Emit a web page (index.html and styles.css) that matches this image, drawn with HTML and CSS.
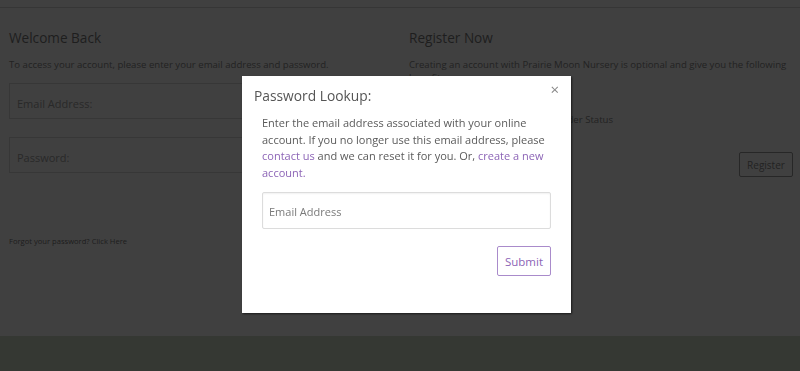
FILE: index.html
```html
<!DOCTYPE html>
<html lang="en">
<head>
    <meta charset="UTF-8">
    <meta name="viewport" content="width=device-width, initial-scale=1.0">
    <title>Sign In - Prairie Moon Nursery</title>
    <link rel="stylesheet" href="styles.css">
</head>
<body>
    <div class="topbar"></div>

    <div class="account">
        <div class="col">
            <h2>Welcome Back</h2>
            <p class="intro">To access your account, please enter your email address and password.</p>
            <div class="field">Email Address:</div>
            <div class="field field-gap">Password:</div>
            <p class="forgot">Forgot your password? <a href="#">Click Here</a></p>
        </div>

        <div class="col">
            <h2>Register Now</h2>
            <p class="intro">Creating an account with Prairie Moon Nursery is optional and give you the following benefits:</p>
            <ul class="benefits">
                <li>Faster Checkout</li>
                <li>Saved Addresses</li>
                <li>Order History and Order Status</li>
            </ul>
            <div class="register-row">
                <button class="register-button">Register</button>
            </div>
        </div>
    </div>

    <div class="footer"></div>

    <!-- password lookup modal -->
    <div class="overlay">
        <div class="modal">
            <div class="modal-head">
                <h3>Password Lookup:</h3>
                <span class="close">&times;</span>
            </div>
            <div class="modal-body">
                <p>Enter the email address associated with your online account. If you no longer use this email address, please <a href="#">contact us</a> and we can reset it for you. Or, <a href="#">create a new account.</a></p>
                <input type="text" class="lookup-input" placeholder="Email Address">
                <div class="submit-row">
                    <button class="submit-button">Submit</button>
                </div>
            </div>
        </div>
    </div>
</body>
</html>
```

FILE: styles.css
```css
body {
    font-family: 'Open Sans', 'Liberation Sans', sans-serif;
    background: white;
    margin: 0;
    height: 371px;
    display: flex;
    flex-direction: column;
    overflow: hidden;
}

.topbar {
    height: 7px;
    border-bottom: 1px solid #d8d8d8;
}

.account {
    flex: 1;
    display: grid;
    grid-template-columns: 384px 384px;
    gap: 16px;
    padding: 0 9px;
}

.col h2 {
    font-size: 13.6px;
    font-weight: normal;
    line-height: 20px;
    color: #7a7a7a;
    margin: 20px 0 0;
}

.intro {
    font-size: 9.6px;
    line-height: 13px;
    color: #8a8a8a;
    margin: 10px 0 0;
}

.field {
    margin-top: 12px;
    border: 1px solid #dcdcdc;
    padding: 3px 7px 0;
    height: 31px;
    font-size: 11px;
    line-height: 34px;
    color: #a4a4a4;
}

.field-gap {
    margin-top: 18px;
}

.forgot {
    font-size: 7.6px;
    line-height: 10px;
    color: #777;
    margin: 63px 0 0;
}

.forgot a {
    color: #777;
    text-decoration: none;
}

.benefits {
    list-style: none;
    padding: 0 0 0 64px;
    margin: 3px 0 0;
    font-size: 9.6px;
    line-height: 13px;
    color: #8a8a8a;
}

.register-row {
    display: flex;
    justify-content: flex-end;
    margin-top: 26px;
}

.register-button {
    font-family: inherit;
    font-size: 10px;
    height: 25px;
    width: 54px;
    padding: 0;
    background: white;
    color: #8a8a8a;
    border: 1px solid #9a9a9a;
    border-radius: 2px;
}

.footer {
    height: 35px;
    background: #d4e0cc;
}

/* modal */
.overlay {
    position: fixed;
    top: 0;
    left: 0;
    right: 0;
    bottom: 0;
    background: rgba(0, 0, 0, 0.75);
    padding: 76px 0 0 242px;
}

.modal {
    width: 329px;
    height: 237px;
    box-sizing: border-box;
    background: white;
    box-shadow: 1px 1px 2px rgba(0, 0, 0, 0.6);
}

.modal-head {
    display: flex;
    justify-content: space-between;
    padding: 10px 12px 0 12px;
}

.modal-head h3 {
    margin: 0;
    font-size: 13.8px;
    font-weight: normal;
    line-height: 20px;
    color: #555;
}

.close {
    font-size: 15px;
    line-height: 10px;
    color: #888;
    margin-top: -2px;
}

.modal-body {
    padding: 9px 20px 0 20px;
}

.modal-body p {
    margin: 0;
    font-size: 11px;
    line-height: 16.5px;
    color: #5a5a5a;
}

.modal-body a {
    color: #8c64b6;
    text-decoration: none;
}

.lookup-input {
    display: block;
    width: 100%;
    height: 37px;
    box-sizing: border-box;
    margin-top: 11px;
    padding: 2px 6px 0;
    border: 1px solid #dcdcdc;
    border-radius: 2px;
    box-shadow: inset 0 1px 2px rgba(0, 0, 0, 0.06);
    font-family: inherit;
    font-size: 11px;
    color: #555;
}

.lookup-input::placeholder {
    color: #7a7a7a;
}

.submit-row {
    display: flex;
    justify-content: flex-end;
    margin-top: 17px;
}

.submit-button {
    font-family: inherit;
    font-size: 11.5px;
    width: 54px;
    height: 30px;
    padding: 0;
    background: white;
    color: #8c64b6;
    border: 1px solid #a98bcb;
    border-radius: 2px;
}
```
